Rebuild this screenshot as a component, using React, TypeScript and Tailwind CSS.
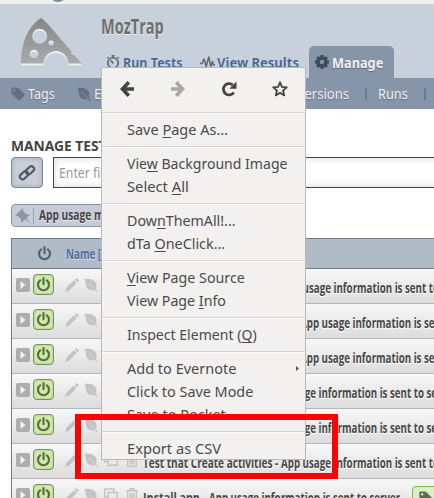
import { useLayoutEffect, useRef, useState, type ReactNode } from "react";

/* Squeezes or stretches one line of text to the width of its box. */
function Fit({ w, className = "", children }: { w: number; className?: string; children: ReactNode }) {
  const ref = useRef<HTMLSpanElement>(null);
  const [k, setK] = useState(1);
  useLayoutEffect(() => {
    if (ref.current) setK(w / ref.current.offsetWidth);
  }, [w]);
  return (
    <span className={`block shrink-0 whitespace-nowrap ${className}`} style={{ width: w }}>
      <span ref={ref} className="inline-block origin-left" style={{ transform: `scaleX(${k})` }}>
        {children}
      </span>
    </span>
  );
}

function Power({ className }: { className: string }) {
  return (
    <svg viewBox="0 0 14 14" className={className} fill="none" stroke="currentColor" strokeWidth="2" strokeLinecap="round">
      <path d="M7 1v5.800" />
      <path d="M3.900 3.200a5.100 5.100 0 1 0 6.200 0" />
    </svg>
  );
}

function Leaf({ className }: { className: string }) {
  return (
    <svg viewBox="0 0 14 14" className={className} fill="currentColor">
      <path d="M.3 1C4 .2 8 .7 10.500 3c2.300 2.200 2.700 5.400 1.300 8.200l1.900 2.100-.9.7-2-2.100C7 13.200 3.500 11.800 2.400 8.500 1.700 6 2 3.400.3 1z" />
      <path d="M4.500 4.800 10.800 11.300" fill="none" stroke="#fff" strokeOpacity=".35" strokeWidth=".8" />
    </svg>
  );
}

function Tag({ className }: { className: string }) {
  return (
    <svg viewBox="0 0 14 14" className={className} fill="currentColor">
      <path fillRule="evenodd" d="M.3 1.500Q.3.5 1.300.5h4.500q.8 0 1.400.6l6.100 6q.7.7 0 1.400l-4.500 4.700q-.7.7-1.400 0l-6.300-6Q.3 6.500.3 5.700zM2 3.200a1.200 1.200 0 1 0 2.400 0 1.200 1.200 0 0 0-2.400 0z" />
    </svg>
  );
}

function Pencil() {
  return (
    <svg viewBox="0 0 14 14" className="h-3.5 w-3.5" fill="currentColor">
      <path d="M0 14 1.200 10 8.900 2.300l2.800 2.800L4 12.800zM9.700 1.500 10.900.400q.6-.5 1.200 0l1.500 1.500q.6.6 0 1.200l-1.100 1.200z" />
    </svg>
  );
}

function Copy() {
  return (
    <svg viewBox="0 0 14 14" className="h-3.5 w-3.5" fill="none" stroke="currentColor" strokeWidth="1.400">
      <path d="M3.500 8.800H.8V1h9v2.800" />
      <path d="M4.200 4.500h9v7.800h-9z" />
    </svg>
  );
}

function Trash() {
  return (
    <svg viewBox="0 0 12 14" className="h-3.5 w-3" fill="none" stroke="currentColor" strokeWidth="1.400">
      <path d="M.5 2.800h11M4 2.500V.8h4v1.700M1.700 3v10.300h8.600V3M4.200 5v6.500M6 5v6.500M7.800 5v6.500" />
    </svg>
  );
}

function Gear() {
  return (
    <svg viewBox="0 0 14 14" className="mr-[3px] h-3.5 w-3.5 text-[#424a56]">
      <g fill="currentColor">
        <rect x="5.300" y="0" width="3.400" height="14" rx=".8" />
        <rect x="5.300" y="0" width="3.400" height="14" rx=".8" transform="rotate(45 7 7)" />
        <rect x="5.300" y="0" width="3.400" height="14" rx=".8" transform="rotate(90 7 7)" />
        <rect x="5.300" y="0" width="3.400" height="14" rx=".8" transform="rotate(135 7 7)" />
        <circle cx="7" cy="7" r="5.400" />
      </g>
      <circle cx="7" cy="7" r="2.200" fill="#8795a9" />
    </svg>
  );
}

function Cheese() {
  return (
    <svg viewBox="0 0 64 50" className="h-[50px] w-16 shrink-0">
      <defs>
        <linearGradient id="cheese" x1="0" y1="0" x2="0" y2="1">
          <stop offset="0" stopColor="#858585" />
          <stop offset="1" stopColor="#aaabad" />
        </linearGradient>
        <path
          id="wedge"
          fillRule="evenodd"
          d="M21 1Q26 4.500 33 13l18.500 21.500q-1.500 3 2.500 3.500l8 8.500H48.500C48 39 42.500 34 36 34S24 39 23.500 46.500H1C.8 27 8 9 21 1zM12.200 19.300a7.500 7.500 0 1 0 15 0 7.500 7.500 0 0 0-15 0zM28.500 26a2.600 2.600 0 1 0 5.200 0 2.600 2.600 0 0 0-5.200 0zM9.700 37a4.300 4.300 0 1 0 8.600 0 4.300 4.300 0 0 0-8.600 0z"
        />
      </defs>
      <use href="#wedge" y="1.800" fill="#eef1f5" />
      <use href="#wedge" fill="url(#cheese)" />
    </svg>
  );
}

const cond = "font-['Open_Sans',sans-serif] font-bold";

type RowData = { lead?: string; leadW?: number; gap: number; tag?: boolean };
const rows: RowData[] = [
  { gap: 138 },
  { gap: 157 },
  { gap: 157 },
  { gap: 123 },
  { gap: 123 },
  { lead: "Test that Create activities -", leadW: 135, gap: 3 },
  { lead: "Install app -", leadW: 63, gap: 3, tag: true },
];

function Row({ row }: { row: RowData }) {
  return (
    <div className="flex h-[35px] shrink-0 items-start border-b border-[#b4b6be] bg-linear-to-b from-[#f8f8f8] to-[#dcdcdc] pl-1 text-[#c3c3c3]">
      <span className="mt-[9px] flex h-3.5 w-3.5 shrink-0 items-center justify-center rounded-[2px] bg-[#adadad]">
        <svg viewBox="0 0 6 8" className="h-2 w-1.5" fill="#f2f2f2">
          <path d="M.5 0 5.500 4 .5 8z" />
        </svg>
      </span>
      <span className="mt-[5px] ml-[3px] flex h-[21px] w-[21px] shrink-0 items-center justify-center rounded-[4px] border border-[#7b8b70] bg-[#cdeba5] shadow-[inset_0_0_2px_#9dbb7c]">
        <Power className="h-[15px] w-[15px] text-[#5b6a4d]" />
      </span>
      <div className="mt-[9px] ml-[11px] flex w-[78px] shrink-0">
        <Pencil />
        <span className="w-[5px]" />
        <Leaf className="h-3.5 w-3.5" />
        <span className="w-1.5" />
        <Copy />
        <span className="w-2" />
        <Trash />
      </div>
      <div className={`flex h-[35px] shrink-0 items-center pt-px text-[14px] text-[#484848] [text-shadow:0_1px_0_#fff] ${cond}`}>
        {row.lead && <Fit w={row.leadW ?? 0}>{row.lead}</Fit>}
        <span style={{ width: row.gap }} className="shrink-0" />
        <Fit w={194}>App usage information is sent to server.</Fit>
      </div>
      {row.tag && (
        <span className="mt-[7px] ml-[9px] flex h-[22px] w-20 shrink-0 rounded-[4px] border border-[#7fb94a] bg-[#dcf0c4] pt-1 pl-1.5">
          <Tag className="h-3.5 w-3.5 text-[#5d6b52]" />
        </span>
      )}
    </div>
  );
}

function Item({ w, children, arrow }: { w: number; children: ReactNode; arrow?: boolean }) {
  return (
    <div className="flex h-[23px] items-center pl-[25px] text-[14.5px] leading-[23px]">
      <Fit w={w}>{children}</Fit>
      {arrow && (
        <svg viewBox="0 0 3 5" className="mr-1.5 ml-auto h-[5px] w-[3px]" fill="#555">
          <path d="M0 0 3 2.500 0 5z" />
        </svg>
      )}
    </div>
  );
}

const Sep = () => <div className="mt-[5px] mb-1 h-0.5 border-t border-[#d5d4d2] bg-[#fbfbfa]" />;
const K = ({ children }: { children: string }) => (
  <span className="underline decoration-1 underline-offset-2">{children}</span>
);

function ContextMenu() {
  return (
    <div className="absolute top-[67px] left-[101px] h-[393px] w-[205px] overflow-hidden border border-[#bab8b5] bg-[#f2f1ef] font-['Noto_Sans',sans-serif] text-[#4a4a4a]">
      <div className="flex h-[39px] items-center pt-[3px] pl-[18px] text-[#444]">
        <svg viewBox="0 0 14 16" className="h-4 w-3.5" fill="none" stroke="currentColor" strokeWidth="3.600">
          <path d="M14 8H3M8.800 1.300 2.500 8 8.800 14.700" />
        </svg>
        <svg viewBox="0 0 14 16" className="ml-[37px] h-4 w-3.5 text-[#aaa8a4]" fill="none" stroke="currentColor" strokeWidth="3.600">
          <path d="M0 8h11M5.200 1.300 11.500 8 5.200 14.700" />
        </svg>
        <svg viewBox="0 0 16 16" className="ml-9 h-4 w-4" fill="none" stroke="currentColor" strokeWidth="2.800">
          <path d="M12.800 11.500A5.700 5.700 0 1 1 11.700 3.800" />
          <path d="M15.500.5v7.200H8.300z" fill="currentColor" stroke="none" />
        </svg>
        <svg viewBox="0 0 16 16" className="ml-[35px] h-4 w-4" fill="none" stroke="currentColor" strokeWidth="1.800" strokeLinejoin="round">
          <path d="m8 1.300 1.900 4.600 4.900.4-3.700 3.200 1.100 4.900L8 11.800l-4.200 2.600 1.100-4.900L1.200 6.300l4.900-.4z" />
        </svg>
      </div>
      <Sep />
      <Item w={101}>Save <K>P</K>age As…</Item>
      <Sep />
      <Item w={160}>Vie<K>w</K> Background Image</Item>
      <Item w={62}>Select <K>A</K>ll</Item>
      <Sep />
      <Item w={109}>Dow<K>n</K>ThemAll!...</Item>
      <Item w={98}>dTa <K>O</K>neClick...</Item>
      <Sep />
      <Item w={118}><K>V</K>iew Page Source</Item>
      <Item w={99}>View Page <K>I</K>nfo</Item>
      <Sep />
      <Item w={130}>Inspect Element (<K>Q</K>)</Item>
      <Sep />
      <Item w={109} arrow>Add to Evernote</Item>
      <Item w={126}>Click to Save Mode</Item>
      <Item w={99}>Save to Pocket</Item>
      <Sep />
      <Item w={94}>Export as CSV</Item>
    </div>
  );
}

export default function App() {
  return (
    <div className="relative flex h-[498px] w-[434px] flex-col overflow-hidden bg-white font-['Noto_Sans',sans-serif]">
      <div className="flex h-1 shrink-0 overflow-hidden bg-[#f2f1ef] pl-[49px]">
        <span className="-mt-[16px] h-[18px] w-[18px] shrink-0 rounded-full border-2 border-[#7889a0]" />
      </div>

      <header className="flex h-[74px] shrink-0 bg-[#c8d0db] pl-5">
        <div className="w-20 shrink-0 pt-[13px]">
          <Cheese />
        </div>
        <div className="flex flex-col">
          <div className={`h-[42px] pt-[7px] pl-px text-[20.500px] leading-[30px] text-[#6f6f70] [text-shadow:0_1px_0_#eef1f5] ${cond}`}>
            <Fit w={63}>MozTrap</Fit>
          </div>
          <nav className="flex h-8 items-center text-[14px] font-bold text-[#4a6a98] [text-shadow:0_1px_0_#e6ebf2]">
            <svg viewBox="0 0 14 14" className="ml-1.5 h-3.5 w-3.5 text-[#5f666f]" fill="none" stroke="currentColor" strokeWidth="1.600">
              <circle cx="7" cy="7.900" r="5.200" />
              <path d="M5.500.8h3M7 .8v2M7.300 8.500 4.800 5.500M1.300 3.300l1.300-1.300M12.700 3.300l-1.300-1.300" />
            </svg>
            <Fit w={60} className="ml-[3px]">Run Tests</Fit>
            <svg viewBox="0 0 15 14" className="ml-[17px] h-3.5 w-[15px] text-[#5f666f]" fill="none" stroke="currentColor" strokeWidth="1.500" strokeLinejoin="round">
              <path d="M0 8.500h2L4 4l2.200 7.500L8.800 2l2 9.500 1.700-5 1 3.500H15" />
            </svg>
            <Fit w={82} className="ml-0.5">View Results</Fit>
            <div className="ml-2.5 flex h-8 w-[85px] items-center rounded-t-[5px] bg-[#8795a9] pl-1.5 text-[#f0f1f3] [text-shadow:0_1px_1px_#5c6675]">
              <Gear />
              <Fit w={51}>Manage</Fit>
            </div>
          </nav>
        </div>
      </header>

      <nav className="flex h-[31px] shrink-0 items-center bg-[#8795a9] pl-[11px] text-[14px] text-[#eef0f3] [text-shadow:0_1px_1px_#667386]">
        <Tag className="h-3.5 w-3.5 shrink-0 text-[#64707f]" />
        <Fit w={27} className="ml-[3px]">Tags</Fit>
        <Leaf className="ml-[22px] h-3.5 w-3.5 shrink-0 text-[#64707f]" />
        <Fit w={87} className="ml-[3px]">Environments</Fit>
        <Fit w={52} className="ml-[116px]">Versions</Fit>
        <span className="ml-4 h-3 w-0.5 bg-[#5c80a5]" />
        <Fit w={30} className="ml-[11px]">Runs</Fit>
        <span className="ml-4 h-3 w-0.5 bg-[#5c80a5]" />
      </nav>

      <main className="flex grow flex-col pl-[11px]">
        <h1 className="mt-[27px] h-5 shrink-0 text-[13.500px] leading-5 font-bold text-[#444]">
          <Fit w={141}>MANAGE TEST CASES</Fit>
        </h1>
        <div className="mt-px flex h-[31px] shrink-0">
          <span className="flex w-8 shrink-0 items-center justify-center rounded-[4px] border border-[#7a8799] bg-[#c9ced8] shadow-[inset_0_0_5px_#a4adbb]">
            <svg viewBox="0 0 18 18" className="h-[18px] w-[18px]" fill="none" stroke="#55585d" strokeWidth="2.200">
              <rect x="-4.600" y="-2.700" width="9.200" height="5.400" rx="2.700" transform="translate(6 11.300) rotate(-43)" />
              <rect x="-4.600" y="-2.700" width="9.200" height="5.400" rx="2.700" transform="translate(12 6.300) rotate(-43)" />
            </svg>
          </span>
          <div className="ml-2.5 flex w-[400px] shrink-0 items-center border border-[#444] bg-white pl-[5px] text-[14px] text-[#999] shadow-[inset_0_0_9px_#d5d9de]">
            <Fit w={77}>Enter filters...</Fit>
          </div>
        </div>
        <div className="mt-4 flex h-[23px] w-[180px] shrink-0 items-center rounded-[4px] border border-[#8795a9] bg-[#c6ccd7]">
          <svg viewBox="0 0 16 16" className="ml-[3px] h-4 w-4 shrink-0" fill="#8f959e">
            <path d="M7.500.5 8.300.8l-.3 2.200 4 3.600 2.200-.4.600.7-3.600 3.400 4.800 5.200-5.900-4.300L6.500 14.800 5.800 14l.5-2.300-3.500-3.700L.8 8.300.3 7.500z" />
          </svg>
          <span className="ml-0.5 h-4 w-px bg-[#9ba4b2]" />
          <Fit w={71} className={`ml-[5px] text-[13.500px] text-[#444] [text-shadow:0_1px_0_#e9edf2] ${cond}`}>App usage mo</Fit>
        </div>

        <div className="mt-[11px] flex w-[470px] shrink-0 flex-col border-l border-[#6f7b8b]">
          <div className="flex h-[31px] shrink-0 items-center border-y border-[#6f7b8b] bg-[#b1bbc8]">
            <Power className="ml-[25px] h-[15px] w-[15px] text-[#59616c]" />
            <Fit w={35} className={`ml-3.5 text-[14px] text-[#4f6f9c] [text-shadow:0_1px_0_#d9e0e8] ${cond}`}>Name [</Fit>
          </div>
          {rows.map((r, i) => (
            <Row key={i} row={r} />
          ))}
        </div>
      </main>

      <ContextMenu />
      <div className="absolute top-[414px] left-[75px] h-[65px] w-[263px] border-[6px] border-[#ff0000]" />
    </div>
  );
}
